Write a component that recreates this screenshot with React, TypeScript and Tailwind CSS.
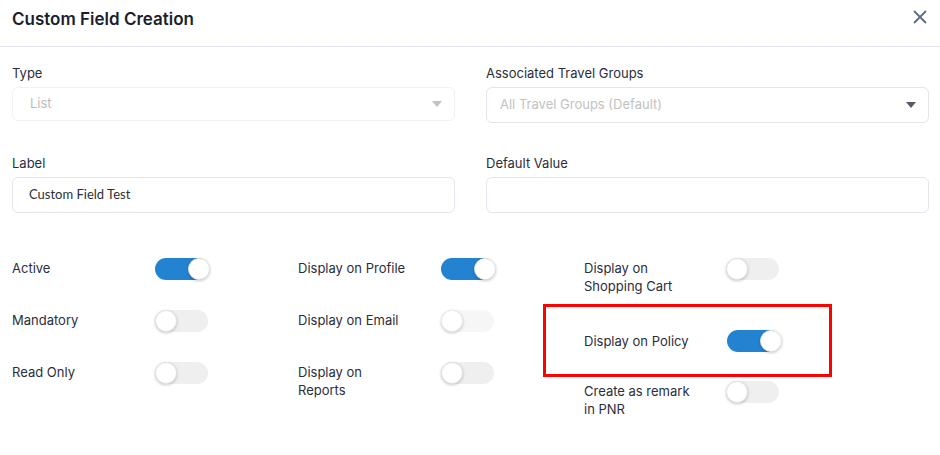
import React from "react";

type ToggleItem = { label: string; on: boolean; faint?: boolean };

const Toggle = ({ on, faint }: { on: boolean; faint?: boolean }) => (
  <div
    className={`relative h-[22px] w-[53px] shrink-0 rounded-full ${
      on ? "bg-[#2383d1]" : faint ? "bg-[#f6f6f6]" : "bg-[#efefef]"
    }`}
  >
    <div
      className={`absolute top-0 h-[22px] w-[22px] rounded-full border border-[#e4e4e4] bg-white shadow-[0_1px_3px_rgba(0,0,0,0.22)] ${
        on ? "left-[33px]" : "left-0"
      } ${faint ? "border-[#eeeeee] shadow-[0_1px_2px_rgba(0,0,0,0.1)]" : ""}`}
    />
  </div>
);

const Row = ({ item }: { item: ToggleItem }) => (
  <div className="flex items-start">
    <div className="w-[114px] pt-[1px] text-[13px] leading-[18px] text-[#2b2e3a]">{item.label}</div>
    <div className="ml-[29px]">
      <Toggle on={item.on} faint={item.faint} />
    </div>
  </div>
);

const col1: ToggleItem[] = [
  { label: "Active", on: true },
  { label: "Mandatory", on: false },
  { label: "Read Only", on: false },
];

const col2: ToggleItem[] = [
  { label: "Display on Profile", on: true },
  { label: "Display on Email", on: false, faint: true },
  { label: "Display on Reports", on: false },
];

const Caret = ({ color }: { color: string }) => (
  <svg width="10" height="6" viewBox="0 0 10 6" className="shrink-0">
    <path d="M0 0 L10 0 L5 6 Z" fill={color} />
  </svg>
);

export default function App() {
  return (
    <div className="h-[455px] w-[940px] bg-white font-['Inter',sans-serif]">
      <div className="flex h-[47px] items-start justify-between border-b border-[#e4e7ef] pl-3 pr-[13px] pt-[7px]">
        <h1 className="text-[17px] font-semibold leading-[24px] text-[#1b1e2c]">Custom Field Creation</h1>
        <svg width="14" height="14" viewBox="0 0 14 14" className="mt-[3px]">
          <path d="M1.5 1.5 L12.5 12.5 M12.5 1.5 L1.5 12.5" stroke="#5f6b85" strokeWidth="1.8" strokeLinecap="round" />
        </svg>
      </div>

      <div className="grid grid-cols-2 gap-x-[31px] pl-3 pr-[11px] pt-[17px]">
        <div>
          <div className="text-[13px] leading-[18px] text-[#2b2e3a]">Type</div>
          <div className="mt-[5px] flex h-[34px] items-center justify-between rounded-md border border-[#f0f1f4] pl-[17px] pr-[12px]">
            <span className="text-[13px] text-[#bdbdbd]">List</span>
            <Caret color="#c4c4c8" />
          </div>
        </div>
        <div>
          <div className="text-[13px] leading-[18px] text-[#2b2e3a]">Associated Travel Groups</div>
          <div className="mt-[5px] flex h-[36px] items-center justify-between rounded-md border border-[#e1e5ed] pl-[13px] pr-[12px]">
            <span className="text-[13px] text-[#c2c2c2]">All Travel Groups (Default)</span>
            <Caret color="#555a66" />
          </div>
        </div>

        <div className="mt-[31px]">
          <div className="text-[13px] leading-[18px] text-[#2b2e3a]">Label</div>
          <div className="mt-[5px] flex h-[36px] items-center rounded-md border border-[#e1e6ef] pl-[16px]">
            <span className="font-['Lato',sans-serif] text-[13px] text-[#2e2f36]">Custom Field Test</span>
          </div>
        </div>
        <div className="mt-[31px]">
          <div className="text-[13px] leading-[18px] text-[#2b2e3a]">Default Value</div>
          <div className="mt-[5px] h-[36px] rounded-md border border-[#e1e6ef]" />
        </div>
      </div>

      <div className="grid grid-cols-[286px_286px_1fr] pl-3 pt-[45px]">
        <div className="flex flex-col gap-[30px]">
          {col1.map((item) => (
            <Row key={item.label} item={item} />
          ))}
        </div>
        <div className="flex flex-col gap-[30px]">
          {col2.map((item) => (
            <Row key={item.label} item={item} />
          ))}
        </div>
        <div className="flex flex-col">
          <div className="flex items-start">
            <div className="w-[114px] pt-[1px] text-[13px] leading-[18px] text-[#2b2e3a]">Display on Shopping Cart</div>
            <div className="ml-[28px]">
              <Toggle on={false} />
            </div>
          </div>
          <div className="-ml-[41px] mt-[9px] flex h-[73px] w-[289px] items-center border-[3px] border-[#ff0000] pl-[38px]">
            <div className="w-[114px] text-[13px] leading-[18px] text-[#2b2e3a]">Display on Policy</div>
            <div className="ml-[29px] mt-[1px]">
              <Toggle on={true} />
            </div>
          </div>
          <div className="mt-[4px] flex items-start">
            <div className="w-[114px] pt-[1px] text-[13px] leading-[18px] text-[#2b2e3a]">Create as remark in PNR</div>
            <div className="ml-[28px]">
              <Toggle on={false} />
            </div>
          </div>
        </div>
      </div>
    </div>
  );
}
